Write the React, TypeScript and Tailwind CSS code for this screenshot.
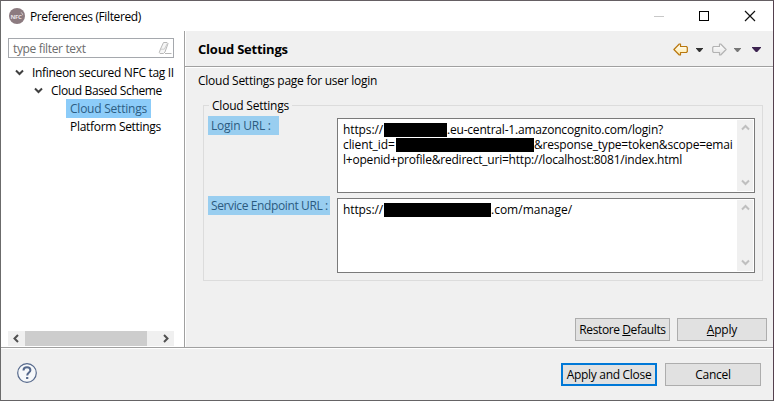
import React from "react";

function Chevron({ dir, className = "" }: { dir: "up" | "down" | "left" | "right"; className?: string }) {
  const paths = {
    up: "M1 5.5 L4.5 2 L8 5.5",
    down: "M1 2.5 L4.5 6 L8 2.5",
    left: "M6 1 L2.5 4.5 L6 8",
    right: "M3 1 L6.5 4.5 L3 8",
  };
  return (
    <svg width="9" height="9" viewBox="0 0 9 9" fill="none" stroke="currentColor" strokeWidth="2" className={className}>
      <path d={paths[dir]} />
    </svg>
  );
}

function Caret({ className }: { className: string }) {
  return (
    <svg viewBox="0 0 8 4" preserveAspectRatio="none" className={className}>
      <path d="M0 0H8V0.6L4.6 4H3.4L0 0.6Z" fill="currentColor" />
    </svg>
  );
}

function Arrow({ flip, stroke, id, from }: { flip?: boolean; stroke: string; id: string; from: string }) {
  return (
    <svg width="15" height="13" viewBox="0 0 15 13" className={flip ? "-scale-x-100" : ""}>
      <defs>
        <linearGradient id={id} x1="0" y1="0" x2="0" y2="1">
          <stop offset="0" stopColor="#ffffff" />
          <stop offset="1" stopColor={from} />
        </linearGradient>
      </defs>
      <path d="M0.9 6.5 L6.3 1 H7.5 V3.5 H13.4 L14.3 4.4 V8.6 L13.4 9.5 H7.5 V12 H6.3 Z" fill={`url(#${id})`} stroke={stroke} strokeWidth="1.2" strokeLinejoin="round" />
    </svg>
  );
}

function Field({ children }: { children: React.ReactNode }) {
  return (
    <div className="flex h-[75px] w-[418px] border border-[#7a7a7a] bg-white p-px">
      <div className="min-w-0 flex-1 pt-0.5 pl-1">{children}</div>
      <div className="flex w-4 flex-col items-center justify-between bg-[#f0f0f0] py-1 text-[#bfbfbf]">
        <Chevron dir="up" />
        <Chevron dir="down" />
      </div>
    </div>
  );
}

function Button({ className, children }: { className: string; children: React.ReactNode }) {
  return <button className={`flex h-[23px] items-center justify-center bg-[#e1e1e1] whitespace-nowrap ${className}`}>{children}</button>;
}

export default function App() {
  return (
    <div className="flex h-[401px] w-[774px] flex-col overflow-hidden border border-t-[#655f63] border-r-[#54404e] border-b-[#656365] border-l-[#6b6b6b] bg-[#f0f0f0] font-['Open_Sans','Noto_Sans',sans-serif] text-[12px] leading-[15px] text-black">
      <header className="flex h-[30px] shrink-0 items-center bg-white">
        <svg width="16" height="16" viewBox="0 0 16 16" className="ml-2">
          <circle cx="8" cy="8" r="8" fill="#8c7b80" />
          <text x="1.5" y="10.5" fontSize="6" fontWeight="700" fill="#e8e2e4" fontFamily="Open Sans" letterSpacing="-0.3">NFC</text>
          <path d="M11.8 4.5 Q13.7 5 13.8 7.2" stroke="#e8e2e4" strokeWidth=".7" fill="none" />
        </svg>
        <span className="ml-[5px] flex-1 whitespace-nowrap tracking-[-0.38px]">Preferences (Filtered)</span>
        <svg width="120" height="20" viewBox="0 0 120 20" fill="none" className="mr-0.5" shapeRendering="crispEdges">
          <path d="M3 10.5H13" stroke="#c8c8c8" />
          <rect x="48.5" y="5.5" width="9" height="9" stroke="#000" />
          <path d="M94 5L104 15M104 5L94 15" stroke="#111" strokeWidth="1.2" shapeRendering="auto" />
        </svg>
      </header>

      <div className="flex h-[316px] shrink-0">
        <aside className="flex w-[183px] shrink-0 flex-col bg-white pl-[7px]">
          <div className="mt-[7px] flex h-5 w-[166px] items-center justify-between border border-[#a5a8ad] pl-1 text-[#6d6d6d]">
            <span className="whitespace-nowrap tracking-[-0.35px]">type filter text</span>
            <svg width="15" height="14" viewBox="0 0 15 14" className="mr-px" fill="none" stroke="#b8b8b8">
              <path d="M6.5 1.5H10L11 2.5L8 11L6.5 12.5H3L2.3 11.5L3.5 8Z" fill="#f6f6f6" />
              <path d="M3.5 8.2H7.3L10.5 2.2" stroke="#cccccc" />
              <path d="M8 12.5H14.5" />
            </svg>
          </div>
          <div className="mt-[5px] flex w-[166px] flex-col overflow-hidden whitespace-nowrap">
            <div className="flex h-[18px] items-center text-[#404040]">
              <Chevron dir="down" className="ml-[7px] shrink-0" />
              <span className="ml-2 tracking-[-0.32px] text-black">Infineon secured NFC tag II</span>
            </div>
            <div className="flex h-[18px] items-center text-[#404040]">
              <Chevron dir="down" className="ml-[26px] shrink-0" />
              <span className="ml-2 tracking-[-0.35px] text-black">Cloud Based Scheme</span>
            </div>
            <div className="ml-[58px] flex h-[19px] w-[85px] items-center bg-[#8cccf9] pl-1 text-[#2d5d83]">
              <span className="tracking-[-0.23px]">Cloud Settings</span>
            </div>
            <div className="-mt-px flex h-[18px] items-center pl-[62px]">
              <span className="tracking-[-0.3px]">Platform Settings</span>
            </div>
          </div>
          <div className="mt-auto mb-px flex h-[15px] w-[166px] items-center bg-[#f0f0f0] text-[#505050]">
            <Chevron dir="left" className="ml-1" />
            <div className="ml-1 h-[15px] w-[122px] bg-[#cdcdcd]" />
            <Chevron dir="right" className="mr-1 ml-auto" />
          </div>
        </aside>

        <main className="flex w-[589px] shrink-0 flex-col border-l border-[#a0a0a0] shadow-[inset_1px_0_0_#fff]">
          <div className="flex h-9 shrink-0 items-center border-b border-[#a0a0a0] pt-0.5 pl-[13px]">
            <h1 className="flex-1 text-[13px] font-bold tracking-[-0.22px]">Cloud Settings</h1>
            <Arrow stroke="#b9770e" id="back" from="#ffe9a0" />
            <Caret className="ml-2 h-1 w-[7px] text-[#333]" />
            <span className="ml-[9px] flex"><Arrow flip stroke="#b3b3b3" id="forward" from="#e4e4e4" /></span>
            <Caret className="ml-[7px] h-1 w-[7px] text-[#777]" />
            <Caret className="mr-3 ml-[11px] h-[5px] w-[9px] text-[#3c2350]" />
          </div>
          <div className="h-px shrink-0 bg-white" />
          <p className="mt-[5px] ml-[13px] whitespace-nowrap tracking-[-0.26px]">Cloud Settings page for user login</p>
          <fieldset className="mt-[10px] ml-[18px] h-[183px] w-[560px] shrink-0 border border-[#dcdcdc]">
            <legend className="ml-[5px] px-[3px] tracking-[-0.22px]">Cloud Settings</legend>
            <div className="mt-[5px] ml-1 flex h-20 items-start">
              <div className="flex w-[129px] text-[#2b5b80]">
                <span className="-mt-0.5 flex h-[19px] w-[71px] items-center bg-[#99cef0] pl-[3px] tracking-[-0.22px] whitespace-nowrap">Login URL :</span>
              </div>
              <Field>
                <div className="flex h-[15px] items-center whitespace-nowrap">
                  <span className="w-[41px] tracking-[-0.1px]">https://</span>
                  <span className="h-[14px] w-[63px] bg-black" />
                  <span className="tracking-[-0.2px]">.eu-central-1.amazoncognito.com/login?</span>
                </div>
                <div className="flex h-[15px] items-center whitespace-nowrap">
                  <span className="w-[53px] tracking-[-0.1px]">client_id=</span>
                  <span className="h-[14px] w-[138px] bg-black" />
                  <span className="tracking-[-0.2px]">&amp;response_type=token&amp;scope=emai</span>
                </div>
                <div className="h-[15px] whitespace-nowrap tracking-[-0.21px]">l+openid+profile&amp;redirect_uri=http://localhost:8081/index.html</div>
              </Field>
            </div>
            <div className="ml-1 flex items-start">
              <div className="flex w-[129px] text-[#2b5b80]">
                <span className="-mt-0.5 flex h-[19px] w-[122px] items-center bg-[#99cef0] pl-[3px] tracking-[-0.38px] whitespace-nowrap">Service Endpoint URL :</span>
              </div>
              <Field>
                <div className="flex h-[15px] items-center whitespace-nowrap">
                  <span className="w-[41px] tracking-[-0.1px]">https://</span>
                  <span className="h-[14px] w-[107px] bg-black" />
                  <span>.com/manage/</span>
                </div>
              </Field>
            </div>
          </fieldset>
          <div className="mt-auto mr-[6px] mb-[6px] flex justify-end gap-[7px]">
            <Button className="w-[95px] border border-[#adadad]">
              <span className="tracking-[-0.4px]">Restore <u>D</u>efaults</span>
            </Button>
            <Button className="w-[90px] border border-[#adadad]">
              <span className="tracking-[-0.2px]"><u>A</u>pply</span>
            </Button>
          </div>
        </main>
      </div>

      <footer className="flex flex-1 items-start border-t border-[#a0a0a0] pr-3 pl-4 shadow-[inset_0_1px_0_#fff]">
        <svg width="20" height="20" viewBox="0 0 20 20" fill="none" stroke="#56698c" className="mt-[15px]">
          <circle cx="10" cy="10" r="9.3" strokeWidth="1.2" fill="#f6f8fa" />
          <path d="M6.5 7.4C6.5 5.3 8 4.3 10 4.3S13.4 5.4 13.4 7.2C13.4 9.4 10.2 9.5 10.2 12.4" strokeWidth="2" />
          <path d="M10.2 14V16" strokeWidth="2.2" />
        </svg>
        <div className="mt-[15px] ml-auto flex gap-2">
          <Button className="w-24 border-2 border-[#0078d7]">
            <span className="tracking-[-0.3px]">Apply and Close</span>
          </Button>
          <Button className="w-24 border border-[#adadad]">
            <span className="tracking-[-0.3px]">Cancel</span>
          </Button>
        </div>
      </footer>
    </div>
  );
}
